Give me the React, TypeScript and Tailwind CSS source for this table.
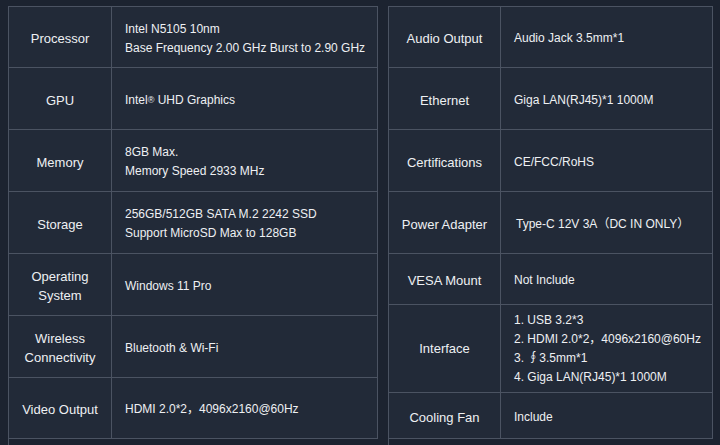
import type { ReactNode } from 'react'

type Row = { label: ReactNode; value: ReactNode; h: string; pt?: string }

const left: Row[] = [
  { h: 'h-[61px]', label: 'Processor', value: <>Intel N5105 10nm<br />Base Frequency 2.00 GHz Burst to 2.90 GHz</> },
  { h: 'h-[62px]', label: 'GPU', value: <>Intel<sup className="text-[9px] relative -top-[1px]">®</sup> UHD Graphics</> },
  { h: 'h-[62px]', label: 'Memory', value: <>8GB Max.<br />Memory Speed 2933 MHz</> },
  { h: 'h-[62px]', label: 'Storage', value: <>256GB/512GB SATA M.2 2242 SSD<br />Support MicroSD Max to 128GB</> },
  { h: 'h-[62px]', label: <>Operating<br />System</>, value: 'Windows 11 Pro' },
  { h: 'h-[62px]', label: <>Wireless<br />Connectivity</>, value: 'Bluetooth & Wi-Fi' },
  { h: 'h-[61px]', label: 'Video Output', value: 'HDMI 2.0*2，4096x2160@60Hz' },
]

const right: Row[] = [
  { h: 'h-[61px]', label: 'Audio Output', value: 'Audio Jack 3.5mm*1' },
  { h: 'h-[62px]', label: 'Ethernet', value: 'Giga LAN(RJ45)*1 1000M' },
  { h: 'h-[62px]', label: 'Certifications', value: 'CE/FCC/RoHS' },
  { h: 'h-[62px]', label: 'Power Adapter', value: <span className="pl-[2px]">Type-C 12V 3A（DC IN ONLY）</span> },
  { h: 'h-[51px]', label: 'VESA Mount', value: 'Not Include' },
  {
    h: 'h-[88px]',
    pt: 'pt-0',
    label: 'Interface',
    value: <>1. USB 3.2*3<br />2. HDMI 2.0*2，4096x2160@60Hz<br />3. ∮3.5mm*1<br />4. Giga LAN(RJ45)*1 1000M</>,
  },
  { h: 'h-[46px]', label: 'Cooling Fan', value: 'Include' },
]

function SpecTable({ rows, labelW, valueW }: { rows: Row[]; labelW: string; valueW: string }) {
  return (
    <div className="border-t border-l border-[#4b5362]">
      {rows.map((r, i) => (
        <div key={i} className={`flex ${r.h}`}>
          <div className={`${labelW} ${r.pt ?? 'pt-[3px]'} flex items-center justify-center text-center border-r border-b border-[#4b5362] bg-[#222a38] text-[13px] leading-[19px] text-[#eef0f3]`}>
            <span>{r.label}</span>
          </div>
          <div className={`${valueW} ${r.pt ?? 'pt-[3px]'} flex items-center pl-[13px] border-r border-b border-[#4b5362] bg-[#222a38] text-[12px] leading-[19px] text-[#eef0f3]`}>
            <span>{r.value}</span>
          </div>
        </div>
      ))}
    </div>
  )
}

export default function App() {
  return (
    <div className="w-[720px] h-[445px] bg-[#1c2330] pt-[6px] pl-[8px] flex gap-[10px] font-['Liberation_Sans','Noto_Sans_CJK_SC',sans-serif]">
      <SpecTable rows={left} labelW="w-[103px]" valueW="w-[266px]" />
      <SpecTable rows={right} labelW="w-[112px]" valueW="w-[212px]" />
    </div>
  )
}
